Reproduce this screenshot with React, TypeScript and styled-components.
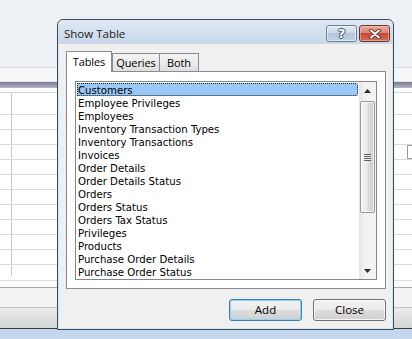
import React from 'react'
import styled, { createGlobalStyle } from 'styled-components'

const GlobalStyle = createGlobalStyle`
  html, body {
    margin: 0;
    padding: 0;
    background: #edf0f4;
  }
  body {
    width: 412px;
    height: 339px;
    overflow: hidden;
    font-family: "Liberation Sans", Arial, sans-serif;
  }
`

const TABLES = [
  'Customers',
  'Employee Privileges',
  'Employees',
  'Inventory Transaction Types',
  'Inventory Transactions',
  'Invoices',
  'Order Details',
  'Order Details Status',
  'Orders',
  'Orders Status',
  'Orders Tax Status',
  'Privileges',
  'Products',
  'Purchase Order Details',
  'Purchase Order Status',
]

// heights of the rows of the query grid behind the dialog
const GRID_ROWS = [22, 15, 15, 15, 15, 15, 15, 15, 15, 15, 15, 16]

const CloseGlyph = () => (
  <svg width='12' height='10' viewBox='0 0 12 10'>
    <path d='M2 1.5 L10 8.5 M10 1.5 L2 8.5' stroke='#5a1f1a' strokeWidth='3.6' strokeLinecap='round' fill='none'/>
    <path d='M2 1.5 L10 8.5 M10 1.5 L2 8.5' stroke='#ffffff' strokeWidth='2' strokeLinecap='round' fill='none'/>
  </svg>
)

const Arrow: React.FC<{ down?: boolean }> = ({ down }) => (
  <svg width='7' height='4' viewBox='0 0 7 4'>
    <path d={down ? 'M0 0 L7 0 L3.5 4 Z' : 'M0 4 L7 4 L3.5 0 Z'} fill='#2b2b2b'/>
  </svg>
)

export const App: React.FC = () => {
  return (
    <Screen>
      <GlobalStyle/>
      <Ribbon/>
      <Strip/>
      <DocBar/>
      <Grid>
        <GridTop/>
        {GRID_ROWS.map((h, i) => (
          <GridRow key={i} $h={h}>
            <RowSelector $last={i === GRID_ROWS.length - 1}/>
            <GridCell>{i === 3 && <CellMarker/>}</GridCell>
          </GridRow>
        ))}
        <GridFill/>
      </Grid>
      <HScroll/>
      <FooterBar/>
      <StatusBar/>

      <Dialog>
        <TitleBar>
          <Title>Show Table</Title>
          <CaptionButtons>
            <HelpButton>?</HelpButton>
            <CloseButton><CloseGlyph/></CloseButton>
          </CaptionButtons>
        </TitleBar>
        <Body>
          <TabRow>
            <Tab $active $w={46}>Tables</Tab>
            <Tab $w={48}>Queries</Tab>
            <Tab $w={40}>Both</Tab>
          </TabRow>
          <Panel>
            <ListBox>
              <Items>
                {TABLES.map((name, i) => (
                  <Item key={name} $selected={i === 0}>{name}</Item>
                ))}
              </Items>
              <ScrollBar>
                <ScrollArrow><Arrow/></ScrollArrow>
                <Thumb>
                  <Grip/>
                </Thumb>
                <ScrollArrow $down><Arrow down/></ScrollArrow>
              </ScrollBar>
            </ListBox>
          </Panel>
          <ButtonRow>
            <PushButton $default>Add</PushButton>
            <PushButton>Close</PushButton>
          </ButtonRow>
        </Body>
      </Dialog>
    </Screen>
  )
}
export default App

const Screen = styled.div`
  position: relative;
  width: 412px;
  height: 339px;
  display: flex;
  flex-direction: column;
  overflow: hidden;
`

const Ribbon = styled.div`
  height: 67px;
  flex-shrink: 0;
  background: #edf0f4;
  border-bottom: 1px solid #d9dde3;
`

const Strip = styled.div`
  height: 13px;
  flex-shrink: 0;
  background: #f6f7f9;
  border-bottom: 1px solid #e1e3e8;
`

const DocBar = styled.div`
  height: 6px;
  flex-shrink: 0;
  background: linear-gradient(180deg, #7b7c93 0%, #9c9db0 60%, #b4b5c4 100%);
`

const Grid = styled.div`
  height: 199px;
  flex-shrink: 0;
  display: flex;
  flex-direction: column;
  background: #ffffff;
`

const GridTop = styled.div`
  height: 5px;
  box-sizing: border-box;
  border-bottom: 1px solid #d4d6d9;
`

const GridRow = styled.div<{ $h: number }>`
  height: ${p => p.$h}px;
  box-sizing: border-box;
  display: grid;
  grid-template-columns: 12px 1fr;
  border-bottom: 1px solid #d9dadd;
`

const RowSelector = styled.div<{ $last?: boolean }>`
  border-right: 1px solid #c6c8cc;
  margin-bottom: ${p => (p.$last ? '4px' : '0')};
`

const GridCell = styled.div`
  display: flex;
  justify-content: flex-end;
  align-items: center;
`

const CellMarker = styled.div`
  width: 4px;
  height: 12px;
  border: 1px solid #9a9ca0;
  border-right: none;
`

const GridFill = styled.div`
  flex: 1;
  background: #fbfbfb;
`

const HScroll = styled.div`
  height: 19px;
  flex-shrink: 0;
  background: #f3f3f4;
  border-top: 1px solid #a3a5a8;
  border-bottom: 1px solid #c5c7ca;
`

const FooterBar = styled.div`
  height: 20px;
  flex-shrink: 0;
  background: linear-gradient(180deg, #ececec 0%, #d5d6d8 100%);
  border-bottom: 1px solid #3c3c3c;
`

const StatusBar = styled.div`
  flex: 1;
  background: #c5d7ed;
`

const Dialog = styled.div`
  position: absolute;
  left: 57px;
  top: 19px;
  width: 337px;
  height: 311px;
  box-sizing: border-box;
  display: flex;
  flex-direction: column;
  background: #f0f0f0;
  border: 1px solid #3a4b5c;
  border-radius: 6px 6px 0 0;
  box-shadow: inset 0 0 0 1px #cfe7f7;
  overflow: hidden;
`

const TitleBar = styled.div`
  height: 24px;
  flex-shrink: 0;
  display: flex;
  align-items: flex-start;
  background: linear-gradient(180deg, #e0e9f4 0%, #d3dfed 55%, #c9d7e9 100%);
  border-radius: 5px 5px 0 0;
`

const Title = styled.div`
  padding: 6px 0 0 6px;
  font-family: "Open Sans", "Liberation Sans", sans-serif;
  font-size: 11.5px;
  line-height: 16px;
  color: #1b1b1b;
`

const CaptionButtons = styled.div`
  margin-left: auto;
  display: flex;
  gap: 2px;
  padding: 5px 3px 0 0;
`

const CaptionButton = styled.div`
  width: 31px;
  height: 17px;
  box-sizing: border-box;
  border-radius: 3px;
  display: flex;
  align-items: center;
  justify-content: center;
`

const HelpButton = styled(CaptionButton)`
  border: 1px solid #6c7f96;
  background: linear-gradient(180deg, #e3ebf4 0%, #cbd8e7 45%, #b3c5db 50%, #c3d3e6 100%);
  box-shadow: inset 0 0 0 1px rgba(255, 255, 255, 0.55);
  font-family: "DejaVu Sans", sans-serif;
  font-weight: bold;
  font-size: 13px;
  line-height: 15px;
  color: #ffffff;
  text-shadow: 0 0 1px #34465c, 1px 0 0 #4b5d74, -1px 0 0 #4b5d74, 0 1px 0 #4b5d74, 0 -1px 0 #4b5d74;
`

const CloseButton = styled(CaptionButton)`
  border: 1px solid #6d302b;
  background: linear-gradient(180deg, #e8a898 0%, #d98372 45%, #c24a36 50%, #d1705c 100%);
  box-shadow: inset 0 0 0 1px rgba(255, 220, 210, 0.45);
`

const Body = styled.div`
  flex: 1;
  display: flex;
  flex-direction: column;
  padding: 7px 7px 0 8px;
`

const TabRow = styled.div`
  height: 20px;
  display: flex;
  align-items: flex-end;
  position: relative;
  z-index: 1;
`

const Tab = styled.div<{ $active?: boolean; $w: number }>`
  width: ${p => p.$w}px;
  height: ${p => (p.$active ? 21 : 18)}px;
  margin-bottom: ${p => (p.$active ? -1 : 0)}px;
  margin-right: ${p => (p.$active ? 0 : -1)}px;
  box-sizing: border-box;
  border: 1px solid #898c95;
  border-bottom: none;
  background: ${p => (p.$active ? '#ffffff' : 'linear-gradient(180deg, #f5f5f5 0%, #ebebeb 50%, #dedede 100%)')};
  font-family: "Open Sans", "Liberation Sans", sans-serif;
  font-size: 11px;
  letter-spacing: -0.1px;
  line-height: ${p => (p.$active ? 20 : 17)}px;
  color: #000000;
  text-align: center;
`

const Panel = styled.div`
  height: 218px;
  box-sizing: border-box;
  border: 1px solid #898c95;
  background: #ffffff;
  padding: 9px 8px 8px 8px;
`

const ListBox = styled.div`
  height: 199px;
  box-sizing: border-box;
  border: 1px solid #828790;
  background: #ffffff;
  display: flex;
`

const Items = styled.div`
  flex: 1;
  padding: 1px 1px 0 1px;
`

const Item = styled.div<{ $selected?: boolean }>`
  height: 13px;
  box-sizing: border-box;
  padding-left: 1px;
  font-family: "DejaVu Sans Condensed", "DejaVu Sans", sans-serif;
  font-stretch: condensed;
  font-size: 11.3px;
  line-height: 13px;
  color: #000000;
  white-space: nowrap;
  border: 1px solid transparent;
  border-left: none;
  ${p => p.$selected && `
    background: #99c8f7;
    border: 1px dotted #1a1a1a;
    border-radius: 0 2px 2px 0;
    padding-left: 0;
  `}
`

const ScrollBar = styled.div`
  width: 17px;
  display: flex;
  flex-direction: column;
  align-items: center;
  background: linear-gradient(90deg, #e4e4e4 0%, #f2f2f2 30%, #f4f4f4 100%);
`

const ScrollArrow = styled.div<{ $down?: boolean }>`
  height: 17px;
  width: 100%;
  display: flex;
  align-items: center;
  justify-content: center;
  margin-top: ${p => (p.$down ? 'auto' : '0')};
`

const Thumb = styled.div`
  margin-top: 2px;
  width: 15px;
  height: 112px;
  box-sizing: border-box;
  border: 1px solid #979797;
  border-radius: 2px;
  background: linear-gradient(90deg, #f3f3f3 0%, #ebebeb 45%, #dbdbdb 55%, #cfcfcf 100%);
  box-shadow: inset 0 0 0 1px rgba(255, 255, 255, 0.7);
  display: flex;
  align-items: center;
  justify-content: center;
`

const Grip = styled.div`
  width: 7px;
  height: 7px;
  background: repeating-linear-gradient(180deg, #5f5f5f 0px, #5f5f5f 1px, #eeeeee 1px, #eeeeee 2px);
`

const ButtonRow = styled.div`
  display: flex;
  justify-content: flex-end;
  gap: 11px;
  margin-top: 10px;
`

const PushButton = styled.div<{ $default?: boolean }>`
  width: 73px;
  height: 22px;
  box-sizing: border-box;
  border-radius: 3px;
  border: 1px solid ${p => (p.$default ? '#3c7fb1' : '#707070')};
  background: linear-gradient(180deg, #f2f2f2 0%, #ebebeb 48%, #dddddd 52%, #cfcfcf 100%);
  box-shadow: inset 0 0 0 1px ${p => (p.$default ? '#8fd3f3' : 'rgba(255, 255, 255, 0.8)')};
  font-family: "Open Sans", "Liberation Sans", sans-serif;
  font-size: 11.5px;
  line-height: 20px;
  text-align: center;
  color: #000000;
`
